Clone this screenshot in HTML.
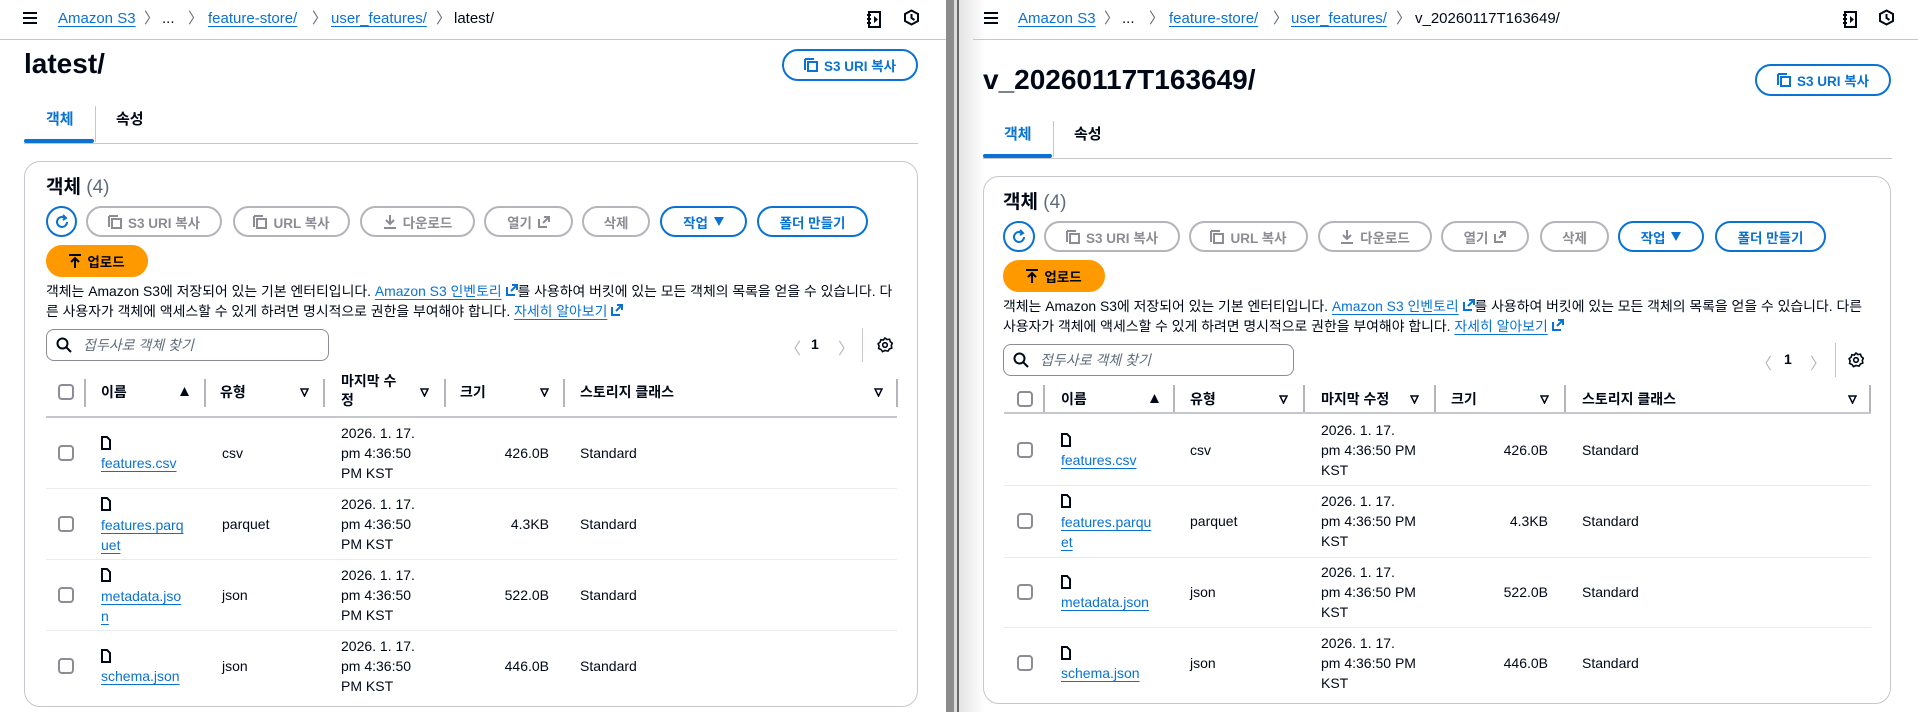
<!DOCTYPE html>
<html><head><meta charset="utf-8">
<style>
*{box-sizing:border-box;margin:0;padding:0}
body{width:1918px;height:712px;overflow:hidden;background:#fff;font-family:"Liberation Sans","Noto Sans CJK KR",sans-serif;color:#000716;position:relative}
.p{position:absolute;top:0;height:712px;overflow:hidden;background:#fff}
.a{position:absolute;white-space:nowrap}
.bc{font-size:15px;line-height:18px;top:10px}
.lk{color:#0972d3;text-decoration:underline;text-underline-offset:3px}
.sep{color:#5f6b7a;font-size:15px;line-height:18px;top:10px}
.topline{position:absolute;left:0;right:0;top:39px;height:1px;background:#c6c6cd}
.title{font-size:28px;font-weight:700;line-height:34px}
.btn{position:absolute;height:31px;border:2px solid #b4b4bb;border-radius:16px;color:#8c8c94;font-weight:700;font-size:13.5px;display:flex;align-items:center;justify-content:center;gap:6px;background:#fff}
.btn.b{border-color:#0972d3;color:#0972d3}
.btn.o{background:#ff9900;border-color:#ff9900;color:#000716}
.tab{font-size:15px;font-weight:700;line-height:20px}
.cont{position:absolute;border:1px solid #c6c6cd;border-radius:16px;background:#fff}
.desc{position:absolute;font-size:13.9px;line-height:20px;color:#000716;white-space:normal;word-break:break-all}
.search{position:absolute;height:32px;border:1px solid #8c8c94;border-radius:8px;font-size:14px;color:#5f6b7a;font-style:italic;padding-left:36px;line-height:30px}
.cb{position:absolute;width:16px;height:16px;border:2px solid #8c8c94;border-radius:4px;background:#fff}
.th{font-size:14px;font-weight:700;line-height:20px}
.vd{position:absolute;width:2px;background:#b4b4bb}
.hl{position:absolute;height:2px;background:#c6c6cd}
.rl{position:absolute;height:1px;background:#e9ebed}
.td{font-size:14px;line-height:20px}
</style></head><body>

<div style="position:absolute;left:946px;top:0;width:8px;height:712px;background:#8c8c8c"></div>
<div style="position:absolute;left:954px;top:0;width:3px;height:712px;background:#dcdcdc"></div>
<div style="position:absolute;left:957px;top:0;width:2px;height:712px;background:#6a6a6a"></div>

<div class="p" style="left:0;width:946px">
 <svg class="a" style="left:22px;top:11px" width="16" height="14"><path d="M1 2h14M1 7h14M1 12h14" stroke="#000716" stroke-width="2"/></svg>
 <span class="a bc lk" style="left:58px">Amazon S3</span>
 <span class="a sep" style="left:144px">〉</span>
 <span class="a bc" style="left:162px">...</span>
 <span class="a sep" style="left:188px">〉</span>
 <span class="a bc lk" style="left:208px">feature-store/</span>
 <span class="a sep" style="left:312px">〉</span>
 <span class="a bc lk" style="left:331px">user_features/</span>
 <span class="a sep" style="left:436px">〉</span>
 <span class="a bc" style="left:454px">latest/</span>
 <svg class="a" style="left:866px;top:11px" width="16" height="17"><path d="M3 1h11v15H3z" fill="none" stroke="#000716" stroke-width="2"/><path d="M1 4h4M1 8h4M1 12h4" stroke="#000716" stroke-width="2"/><path d="M8 5l4 3.5-4 3.5z" fill="#000716"/></svg>
 <svg class="a" style="left:903px;top:9px" width="17" height="17"><path d="M8.5 1.5l6.5 3.5v7l-6.5 3.5-6.5-3.5v-7z" fill="none" stroke="#000716" stroke-width="2"/><path d="M8.5 5v4l3 2" stroke="#000716" stroke-width="2" fill="none"/></svg>
 <div class="topline"></div>

 <div class="a title" style="left:24px;top:47px">latest/</div>
 <div class="btn b" style="left:782px;top:49px;width:136px;height:32px"><svg width="14" height="14"><path d="M1 1h9M1 1v11" stroke="#0972d3" stroke-width="2" fill="none"/><rect x="4" y="4" width="9" height="9" fill="none" stroke="#0972d3" stroke-width="2"/></svg>S3 URI 복사</div>

 <div class="a tab" style="left:46px;top:110px;color:#0972d3">객체</div>
 <div class="a" style="left:95px;top:106px;width:1px;height:36px;background:#c6c6cd"></div>
 <div class="a tab" style="left:116px;top:110px">속성</div>
 <div class="a" style="left:24px;top:143px;width:894px;height:1px;background:#c6c6cd"></div>
 <div class="a" style="left:24px;top:139px;width:70px;height:4px;background:#0972d3;border-radius:2px"></div>

 <div class="cont" style="left:24px;top:161px;width:894px;height:546px"></div>
 <div class="a" style="left:46px;top:176px;font-size:19px;line-height:24px"><b>객체</b> <span style="color:#5f6b7a">(4)</span></div>

 <div class="btn b" style="left:46px;top:206px;width:31px;padding:0"><svg width="16" height="16"><path d="M13 8a5 5 0 1 1-2-4" stroke="#0972d3" stroke-width="2" fill="none"/><path d="M9 1l3 3-3 2" stroke="#0972d3" stroke-width="2" fill="none"/></svg></div>
 <div class="btn" style="left:86px;top:206px;width:136px"><svg width="14" height="14"><path d="M1 1h9M1 1v11" stroke="#8c8c94" stroke-width="2" fill="none"/><rect x="4" y="4" width="9" height="9" fill="none" stroke="#8c8c94" stroke-width="2"/></svg>S3 URI 복사</div>
 <div class="btn" style="left:233px;top:206px;width:117px"><svg width="14" height="14"><path d="M1 1h9M1 1v11" stroke="#8c8c94" stroke-width="2" fill="none"/><rect x="4" y="4" width="9" height="9" fill="none" stroke="#8c8c94" stroke-width="2"/></svg>URL 복사</div>
 <div class="btn" style="left:360px;top:206px;width:115px"><svg width="14" height="15"><path d="M7 1v9M3 6l4 4 4-4M1 14h12" stroke="#8c8c94" stroke-width="2" fill="none"/></svg>다운로드</div>
 <div class="btn" style="left:484px;top:206px;width:89px">열기<svg width="12" height="12"><path d="M1 3v8h8M5 7l6-6M6 1h5v5" stroke="#8c8c94" stroke-width="2" fill="none"/></svg></div>
 <div class="btn" style="left:582px;top:206px;width:68px">삭제</div>
 <div class="btn b" style="left:660px;top:206px;width:87px">작업 <svg width="10" height="9"><path d="M0 0h10L5 9z" fill="#0972d3"/></svg></div>
 <div class="btn b" style="left:757px;top:206px;width:111px">폴더 만들기</div>
 <div class="btn o" style="left:46px;top:245px;width:102px;height:32px"><svg width="12" height="14"><path d="M0 1h12M6 4v10M2 8l4-4 4 4" stroke="#000716" stroke-width="2" fill="none"/></svg>업로드</div>

 <div class="desc" style="left:46px;top:281px;width:858px">객체는 Amazon S3에 저장되어 있는 기본 엔터티입니다. <span class="lk">Amazon S3 인벤토리</span> <svg width="12" height="12"><path d="M1 3v8h8M5 7l6-6M6 1h5v5" stroke="#0972d3" stroke-width="2" fill="none"/></svg>를 사용하여 버킷에 있는 모든 객체의 목록을 얻을 수 있습니다. 다른 사용자가 객체에 액세스할 수 있게 하려면 명시적으로 권한을 부여해야 합니다. <span class="lk">자세히 알아보기</span> <svg width="12" height="12"><path d="M1 3v8h8M5 7l6-6M6 1h5v5" stroke="#0972d3" stroke-width="2" fill="none"/></svg></div>

 <div class="search" style="left:46px;top:329px;width:283px">접두사로 객체 찾기</div>
 <svg class="a" style="left:56px;top:337px" width="16" height="16"><circle cx="6.5" cy="6.5" r="5" stroke="#000716" stroke-width="2" fill="none"/><path d="M10 10l5 5" stroke="#000716" stroke-width="2"/></svg>
 <span class="a" style="left:785px;top:335px;color:#b4b4bb;font-size:16px">〈</span>
 <span class="a" style="left:811px;top:336px;font-size:14px;font-weight:700">1</span>
 <span class="a" style="left:838px;top:335px;color:#b4b4bb;font-size:16px">〉</span>
 <div class="a" style="left:862px;top:328px;width:1px;height:34px;background:#c6c6cd"></div>
 <svg class="a" style="left:877px;top:337px" width="16" height="16"><path d="M8 1l2 1.5 2.5-.3.8 2.4 2 1.6-1 2.3.5 2.5-2.4 1-1.4 2.1L8 13.5 5.5 14.6 4 12.5l-2.4-1 .5-2.5-1-2.3 2-1.6.8-2.4 2.5.3z" fill="none" stroke="#000716" stroke-width="1.6"/><circle cx="8" cy="8" r="2.3" fill="none" stroke="#000716" stroke-width="1.6"/></svg>

 <div class="cb" style="left:58px;top:384px"></div>
 <div class="vd" style="left:84px;top:379px;height:28px"></div>
 <div class="a th" style="left:101px;top:382px">이름</div>
 <svg class="a" style="left:180px;top:387px" width="9" height="9"><path d="M4.5 0L9 9H0z" fill="#000716"/></svg>
 <div class="vd" style="left:204px;top:379px;height:28px"></div>
 <div class="a th" style="left:220px;top:382px">유형</div>
 <svg class="a" style="left:300px;top:388px" width="9" height="9"><path d="M1 1h7L4.5 8z" fill="none" stroke="#000716" stroke-width="1.5"/></svg>
 <div class="vd" style="left:323px;top:379px;height:28px"></div>
 <div class="a th" style="left:341px;top:372px;line-height:19px">마지막 수<br>정</div>
 <svg class="a" style="left:420px;top:388px" width="9" height="9"><path d="M1 1h7L4.5 8z" fill="none" stroke="#000716" stroke-width="1.5"/></svg>
 <div class="vd" style="left:444px;top:379px;height:28px"></div>
 <div class="a th" style="left:460px;top:382px">크기</div>
 <svg class="a" style="left:540px;top:388px" width="9" height="9"><path d="M1 1h7L4.5 8z" fill="none" stroke="#000716" stroke-width="1.5"/></svg>
 <div class="vd" style="left:563px;top:379px;height:28px"></div>
 <div class="a th" style="left:580px;top:382px">스토리지 클래스</div>
 <svg class="a" style="left:874px;top:388px" width="9" height="9"><path d="M1 1h7L4.5 8z" fill="none" stroke="#000716" stroke-width="1.5"/></svg>
 <div class="vd" style="left:896px;top:379px;height:28px"></div>
 <div class="hl" style="left:46px;top:416px;width:851px"></div>

 <div class="cb" style="left:58px;top:445px"></div>
 <svg class="a" style="left:101px;top:436px" width="10" height="14"><path d="M1 1h5l3 3v9H1z" fill="none" stroke="#000716" stroke-width="2"/></svg>
 <div class="a td lk" style="left:101px;top:453px">features.csv</div>
 <div class="a td" style="left:222px;top:443px">csv</div>
 <div class="a td" style="left:341px;top:423px">2026. 1. 17.<br>pm 4:36:50<br>PM KST</div>
 <div class="a td" style="left:449px;width:100px;text-align:right;top:443px">426.0B</div>
 <div class="a td" style="left:580px;top:443px">Standard</div>
 <div class="rl" style="left:46px;top:488px;width:851px"></div>

 <div class="cb" style="left:58px;top:516px"></div>
 <svg class="a" style="left:101px;top:497px" width="10" height="14"><path d="M1 1h5l3 3v9H1z" fill="none" stroke="#000716" stroke-width="2"/></svg>
 <div class="a td lk" style="left:101px;top:515px">features.parq<br>uet</div>
 <div class="a td" style="left:222px;top:514px">parquet</div>
 <div class="a td" style="left:341px;top:494px">2026. 1. 17.<br>pm 4:36:50<br>PM KST</div>
 <div class="a td" style="left:449px;width:100px;text-align:right;top:514px">4.3KB</div>
 <div class="a td" style="left:580px;top:514px">Standard</div>
 <div class="rl" style="left:46px;top:559px;width:851px"></div>

 <div class="cb" style="left:58px;top:587px"></div>
 <svg class="a" style="left:101px;top:568px" width="10" height="14"><path d="M1 1h5l3 3v9H1z" fill="none" stroke="#000716" stroke-width="2"/></svg>
 <div class="a td lk" style="left:101px;top:586px">metadata.jso<br>n</div>
 <div class="a td" style="left:222px;top:585px">json</div>
 <div class="a td" style="left:341px;top:565px">2026. 1. 17.<br>pm 4:36:50<br>PM KST</div>
 <div class="a td" style="left:449px;width:100px;text-align:right;top:585px">522.0B</div>
 <div class="a td" style="left:580px;top:585px">Standard</div>
 <div class="rl" style="left:46px;top:630px;width:851px"></div>

 <div class="cb" style="left:58px;top:658px"></div>
 <svg class="a" style="left:101px;top:649px" width="10" height="14"><path d="M1 1h5l3 3v9H1z" fill="none" stroke="#000716" stroke-width="2"/></svg>
 <div class="a td lk" style="left:101px;top:666px">schema.json</div>
 <div class="a td" style="left:222px;top:656px">json</div>
 <div class="a td" style="left:341px;top:636px">2026. 1. 17.<br>pm 4:36:50<br>PM KST</div>
 <div class="a td" style="left:449px;width:100px;text-align:right;top:656px">446.0B</div>
 <div class="a td" style="left:580px;top:656px">Standard</div>
</div>

<div class="p" style="left:959px;width:959px">
 <div class="a" style="left:0;top:0;width:26px;height:712px;background:linear-gradient(90deg,#e4e4e4,#fff)"></div>
 <div style="position:absolute;left:1px;top:0;width:958px;height:712px">
 <svg class="a" style="left:23px;top:11px" width="16" height="14"><path d="M1 2h14M1 7h14M1 12h14" stroke="#000716" stroke-width="2"/></svg>
 <span class="a bc lk" style="left:58px">Amazon S3</span>
 <span class="a sep" style="left:144px">〉</span>
 <span class="a bc" style="left:162px">...</span>
 <span class="a sep" style="left:189px">〉</span>
 <span class="a bc lk" style="left:209px">feature-store/</span>
 <span class="a sep" style="left:313px">〉</span>
 <span class="a bc lk" style="left:331px">user_features/</span>
 <span class="a sep" style="left:436px">〉</span>
 <span class="a bc" style="left:455px">v_20260117T163649/</span>
 <svg class="a" style="left:882px;top:11px" width="16" height="17"><path d="M3 1h11v15H3z" fill="none" stroke="#000716" stroke-width="2"/><path d="M1 4h4M1 8h4M1 12h4" stroke="#000716" stroke-width="2"/><path d="M8 5l4 3.5-4 3.5z" fill="#000716"/></svg>
 <svg class="a" style="left:918px;top:9px" width="17" height="17"><path d="M8.5 1.5l6.5 3.5v7l-6.5 3.5-6.5-3.5v-7z" fill="none" stroke="#000716" stroke-width="2"/><path d="M8.5 5v4l3 2" stroke="#000716" stroke-width="2" fill="none"/></svg>
 </div>
 <div class="topline" style="left:14px"></div>

 <div style="position:absolute;left:-1px;top:15px;width:960px;height:697px">
 <div class="a title" style="left:25px;top:48px">v_20260117T163649/</div>
 <div class="btn b" style="left:797px;top:49px;width:136px;height:32px"><svg width="14" height="14"><path d="M1 1h9M1 1v11" stroke="#0972d3" stroke-width="2" fill="none"/><rect x="4" y="4" width="9" height="9" fill="none" stroke="#0972d3" stroke-width="2"/></svg>S3 URI 복사</div>

 <div class="a tab" style="left:46px;top:110px;color:#0972d3">객체</div>
 <div class="a" style="left:95px;top:106px;width:1px;height:36px;background:#c6c6cd"></div>
 <div class="a tab" style="left:116px;top:110px">속성</div>
 <div class="a" style="left:25px;top:143px;width:909px;height:1px;background:#c6c6cd"></div>
 <div class="a" style="left:25px;top:139px;width:69px;height:4px;background:#0972d3;border-radius:2px"></div>

 <div class="cont" style="left:25px;top:161px;width:908px;height:528px"></div>
 <div class="a" style="left:45px;top:176px;font-size:19px;line-height:24px"><b>객체</b> <span style="color:#5f6b7a">(4)</span></div>

 <div class="btn b" style="left:45px;top:206px;width:32px;padding:0"><svg width="16" height="16"><path d="M13 8a5 5 0 1 1-2-4" stroke="#0972d3" stroke-width="2" fill="none"/><path d="M9 1l3 3-3 2" stroke="#0972d3" stroke-width="2" fill="none"/></svg></div>
 <div class="btn" style="left:86px;top:206px;width:136px"><svg width="14" height="14"><path d="M1 1h9M1 1v11" stroke="#8c8c94" stroke-width="2" fill="none"/><rect x="4" y="4" width="9" height="9" fill="none" stroke="#8c8c94" stroke-width="2"/></svg>S3 URI 복사</div>
 <div class="btn" style="left:231px;top:206px;width:119px"><svg width="14" height="14"><path d="M1 1h9M1 1v11" stroke="#8c8c94" stroke-width="2" fill="none"/><rect x="4" y="4" width="9" height="9" fill="none" stroke="#8c8c94" stroke-width="2"/></svg>URL 복사</div>
 <div class="btn" style="left:360px;top:206px;width:114px"><svg width="14" height="15"><path d="M7 1v9M3 6l4 4 4-4M1 14h12" stroke="#8c8c94" stroke-width="2" fill="none"/></svg>다운로드</div>
 <div class="btn" style="left:483px;top:206px;width:88px">열기<svg width="12" height="12"><path d="M1 3v8h8M5 7l6-6M6 1h5v5" stroke="#8c8c94" stroke-width="2" fill="none"/></svg></div>
 <div class="btn" style="left:582px;top:206px;width:69px">삭제</div>
 <div class="btn b" style="left:660px;top:206px;width:86px">작업 <svg width="10" height="9"><path d="M0 0h10L5 9z" fill="#0972d3"/></svg></div>
 <div class="btn b" style="left:757px;top:206px;width:111px">폴더 만들기</div>
 <div class="btn o" style="left:45px;top:245px;width:102px;height:32px"><svg width="12" height="14"><path d="M0 1h12M6 4v10M2 8l4-4 4 4" stroke="#000716" stroke-width="2" fill="none"/></svg>업로드</div>

 <div class="desc" style="left:45px;top:281px;width:872px">객체는 Amazon S3에 저장되어 있는 기본 엔터티입니다. <span class="lk">Amazon S3 인벤토리</span> <svg width="12" height="12"><path d="M1 3v8h8M5 7l6-6M6 1h5v5" stroke="#0972d3" stroke-width="2" fill="none"/></svg>를 사용하여 버킷에 있는 모든 객체의 목록을 얻을 수 있습니다. 다른 사용자가 객체에 액세스할 수 있게 하려면 명시적으로 권한을 부여해야 합니다. <span class="lk">자세히 알아보기</span> <svg width="12" height="12"><path d="M1 3v8h8M5 7l6-6M6 1h5v5" stroke="#0972d3" stroke-width="2" fill="none"/></svg></div>

 <div class="search" style="left:45px;top:329px;width:291px">접두사로 객체 찾기</div>
 <svg class="a" style="left:55px;top:337px" width="16" height="16"><circle cx="6.5" cy="6.5" r="5" stroke="#000716" stroke-width="2" fill="none"/><path d="M10 10l5 5" stroke="#000716" stroke-width="2"/></svg>
 <span class="a" style="left:798px;top:335px;color:#b4b4bb;font-size:16px">〈</span>
 <span class="a" style="left:826px;top:336px;font-size:14px;font-weight:700">1</span>
 <span class="a" style="left:852px;top:335px;color:#b4b4bb;font-size:16px">〉</span>
 <div class="a" style="left:877px;top:328px;width:1px;height:34px;background:#c6c6cd"></div>
 <svg class="a" style="left:890px;top:337px" width="16" height="16"><path d="M8 1l2 1.5 2.5-.3.8 2.4 2 1.6-1 2.3.5 2.5-2.4 1-1.4 2.1L8 13.5 5.5 14.6 4 12.5l-2.4-1 .5-2.5-1-2.3 2-1.6.8-2.4 2.5.3z" fill="none" stroke="#000716" stroke-width="1.6"/><circle cx="8" cy="8" r="2.3" fill="none" stroke="#000716" stroke-width="1.6"/></svg>
 </div>

 <div class="cb" style="left:58px;top:391px"></div>
 <div class="vd" style="left:84px;top:385px;height:28px"></div>
 <div class="a th" style="left:102px;top:389px">이름</div>
 <svg class="a" style="left:191px;top:394px" width="9" height="9"><path d="M4.5 0L9 9H0z" fill="#000716"/></svg>
 <div class="vd" style="left:214px;top:385px;height:28px"></div>
 <div class="a th" style="left:231px;top:389px">유형</div>
 <svg class="a" style="left:320px;top:395px" width="9" height="9"><path d="M1 1h7L4.5 8z" fill="none" stroke="#000716" stroke-width="1.5"/></svg>
 <div class="vd" style="left:344px;top:385px;height:28px"></div>
 <div class="a th" style="left:362px;top:389px">마지막 수정</div>
 <svg class="a" style="left:451px;top:395px" width="9" height="9"><path d="M1 1h7L4.5 8z" fill="none" stroke="#000716" stroke-width="1.5"/></svg>
 <div class="vd" style="left:475px;top:385px;height:28px"></div>
 <div class="a th" style="left:492px;top:389px">크기</div>
 <svg class="a" style="left:581px;top:395px" width="9" height="9"><path d="M1 1h7L4.5 8z" fill="none" stroke="#000716" stroke-width="1.5"/></svg>
 <div class="vd" style="left:605px;top:385px;height:28px"></div>
 <div class="a th" style="left:623px;top:389px">스토리지 클래스</div>
 <svg class="a" style="left:889px;top:395px" width="9" height="9"><path d="M1 1h7L4.5 8z" fill="none" stroke="#000716" stroke-width="1.5"/></svg>
 <div class="vd" style="left:910px;top:385px;height:28px"></div>
 <div class="hl" style="left:45px;top:412px;width:867px"></div>

 <div class="cb" style="left:58px;top:442px"></div>
 <svg class="a" style="left:102px;top:433px" width="10" height="14"><path d="M1 1h5l3 3v9H1z" fill="none" stroke="#000716" stroke-width="2"/></svg>
 <div class="a td lk" style="left:102px;top:450px">features.csv</div>
 <div class="a td" style="left:231px;top:440px">csv</div>
 <div class="a td" style="left:362px;top:420px">2026. 1. 17.<br>pm 4:36:50 PM<br>KST</div>
 <div class="a td" style="left:489px;width:100px;text-align:right;top:440px">426.0B</div>
 <div class="a td" style="left:623px;top:440px">Standard</div>
 <div class="rl" style="left:45px;top:485px;width:867px"></div>

 <div class="cb" style="left:58px;top:513px"></div>
 <svg class="a" style="left:102px;top:494px" width="10" height="14"><path d="M1 1h5l3 3v9H1z" fill="none" stroke="#000716" stroke-width="2"/></svg>
 <div class="a td lk" style="left:102px;top:512px">features.parqu<br>et</div>
 <div class="a td" style="left:231px;top:511px">parquet</div>
 <div class="a td" style="left:362px;top:491px">2026. 1. 17.<br>pm 4:36:50 PM<br>KST</div>
 <div class="a td" style="left:489px;width:100px;text-align:right;top:511px">4.3KB</div>
 <div class="a td" style="left:623px;top:511px">Standard</div>
 <div class="rl" style="left:45px;top:557px;width:867px"></div>

 <div class="cb" style="left:58px;top:584px"></div>
 <svg class="a" style="left:102px;top:575px" width="10" height="14"><path d="M1 1h5l3 3v9H1z" fill="none" stroke="#000716" stroke-width="2"/></svg>
 <div class="a td lk" style="left:102px;top:592px">metadata.json</div>
 <div class="a td" style="left:231px;top:582px">json</div>
 <div class="a td" style="left:362px;top:562px">2026. 1. 17.<br>pm 4:36:50 PM<br>KST</div>
 <div class="a td" style="left:489px;width:100px;text-align:right;top:582px">522.0B</div>
 <div class="a td" style="left:623px;top:582px">Standard</div>
 <div class="rl" style="left:45px;top:627px;width:867px"></div>

 <div class="cb" style="left:58px;top:655px"></div>
 <svg class="a" style="left:102px;top:646px" width="10" height="14"><path d="M1 1h5l3 3v9H1z" fill="none" stroke="#000716" stroke-width="2"/></svg>
 <div class="a td lk" style="left:102px;top:663px">schema.json</div>
 <div class="a td" style="left:231px;top:653px">json</div>
 <div class="a td" style="left:362px;top:633px">2026. 1. 17.<br>pm 4:36:50 PM<br>KST</div>
 <div class="a td" style="left:489px;width:100px;text-align:right;top:653px">446.0B</div>
 <div class="a td" style="left:623px;top:653px">Standard</div>
</div>
</body></html>
